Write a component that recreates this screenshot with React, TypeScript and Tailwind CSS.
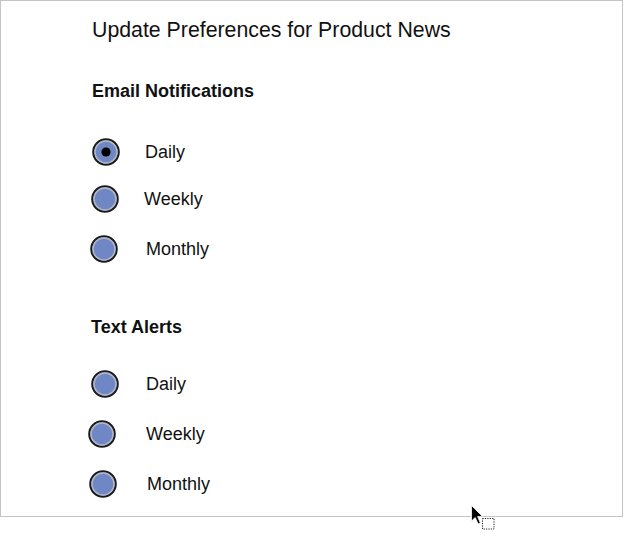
import React from 'react';

interface RadioRowProps {
  label: string;
  checked?: boolean;
  rowClass: string;
  labelClass: string;
}

const Radio: React.FC<{ checked?: boolean }> = ({ checked }) => (
  <svg width="28" height="28" viewBox="0 0 28 28" className="shrink-0">
    <circle cx="14" cy="14" r="12.8" fill="#6f87c4" stroke="#1c1c1c" strokeWidth="2" />
    <circle cx="14" cy="14" r="11" fill="none" stroke="#b4b8c2" strokeWidth="1.4" />
    {checked && <circle cx="14" cy="14" r="4.6" fill="#000" />}
  </svg>
);

const RadioRow: React.FC<RadioRowProps> = ({ label, checked, rowClass, labelClass }) => (
  <div className={`flex items-center h-7 ${rowClass}`}>
    <Radio checked={checked} />
    <span className={`text-[18px] leading-none text-[#111] ${labelClass}`}>{label}</span>
  </div>
);

const Cursor = () => (
  <svg width="26" height="28" viewBox="0 0 26 28" className="absolute left-[470px] top-[504px]">
    <path d="M1.5 1.5 L1.5 17 L5.2 13.6 L8.2 20 L10.4 19 L7.6 12.6 L12.4 12.4 Z" fill="#000" stroke="#fff" strokeWidth="0.8" />
    <rect x="12.5" y="14.5" width="11.5" height="10.5" fill="none" stroke="#222" strokeWidth="1" strokeDasharray="1.2 1.2" />
  </svg>
);

export default function App() {
  return (
    <div className="relative w-[624px] h-[536px] bg-white" style={{ fontFamily: '"Liberation Sans", Arial, sans-serif' }}>
      <div className="w-[623px] h-[517px] border border-[#c4c4c4] flex flex-col">
        <h1 className="mt-[18px] ml-[91px] h-6 flex items-center text-[21.3px] font-normal text-[#111]">
          Update Preferences for Product News
        </h1>

        <h2 className="mt-[36px] ml-[91px] h-6 flex items-center text-[18px] font-bold text-[#111]">
          Email Notifications
        </h2>
        <RadioRow label="Daily" checked rowClass="mt-[35px] ml-[91px]" labelClass="ml-[25px]" />
        <RadioRow label="Weekly" rowClass="mt-[19px] ml-[90px]" labelClass="ml-[25px]" />
        <RadioRow label="Monthly" rowClass="mt-[22px] ml-[89px]" labelClass="ml-[28px]" />

        <h2 className="mt-[52px] ml-[90px] h-6 flex items-center text-[18px] font-bold text-[#111]">
          Text Alerts
        </h2>
        <RadioRow label="Daily" rowClass="mt-[31px] ml-[90px]" labelClass="ml-[27px]" />
        <RadioRow label="Weekly" rowClass="mt-[22px] ml-[87px]" labelClass="ml-[30px]" />
        <RadioRow label="Monthly" rowClass="mt-[22px] ml-[88px]" labelClass="ml-[30px]" />
      </div>
      <Cursor />
    </div>
  );
}
